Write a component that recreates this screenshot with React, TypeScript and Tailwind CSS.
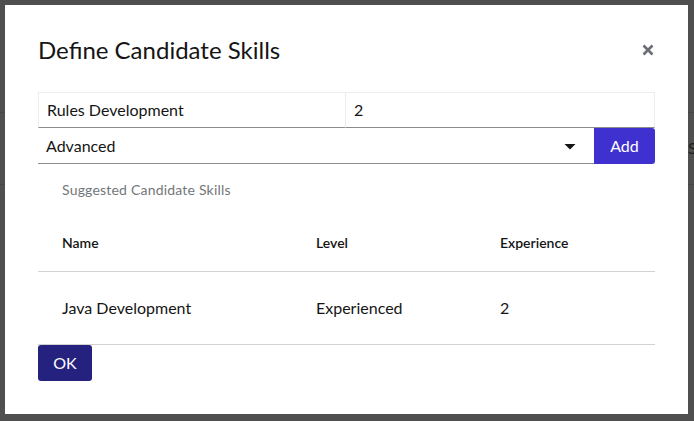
import React from "react";

const rows = [{ name: "Java Development", level: "Experienced", experience: "2" }];

const App = () => {
  return (
    <div
      className="relative h-[421px] w-[694px] overflow-hidden bg-[#4f4f4f]"
      style={{ fontFamily: "Lato, 'Noto Sans', sans-serif" }}
    >
      {/* page behind the backdrop */}
      <div className="pt-[112px]">
        <div className="h-[73px] border-t border-b border-[#464646]" />
        <div className="absolute left-[688px] top-[136px] text-[16px] text-[#1f1f1f]">S</div>
      </div>

      <div className="absolute left-[5px] top-[5px] flex h-[409px] w-[683px] flex-col bg-white px-[33px]">
        <div className="flex items-center justify-between pt-[29px]">
          <h1 className="text-[24px] leading-[32px] text-[#151515]">Define Candidate Skills</h1>
          <button className="mr-[1px] text-[#6a6e73]">
            <svg width="12" height="12" viewBox="0 0 12 12">
              <path d="M1.5 1.5 L10.5 10.5 M10.5 1.5 L1.5 10.5" stroke="currentColor" strokeWidth="2.6" strokeLinecap="butt" />
            </svg>
          </button>
        </div>

        <div className="mt-[26px] flex">
          <div className="flex h-[36px] w-[308px] items-center border border-b-[#8a8d90] border-[#ededed] px-[8px] text-[16px] text-[#151515]">
            Rules Development
          </div>
          <div className="flex h-[36px] flex-1 items-center border border-l-0 border-b-[#8a8d90] border-[#ededed] px-[8px] text-[16px] text-[#151515]">
            2
          </div>
        </div>
        <div className="flex h-[36px]">
          <div className="flex flex-1 items-center justify-between border-b border-[#8a8d90] px-[8px] text-[16px] text-[#151515]">
            <span>Advanced</span>
            <svg width="12" height="8" viewBox="0 0 12 8" className="mr-[10px] mt-[2px]">
              <path d="M0.5 1 L11.5 1 L6 6.5 Z" fill="#151515" />
            </svg>
          </div>
          <button className="w-[61px] rounded-r-[3px] bg-[#3e31cf] text-[16px] text-white">Add</button>
        </div>

        <div className="mt-[17px] pl-[24px] text-[14px] leading-[18px] tracking-[0.2px] text-[#737679]">
          Suggested Candidate Skills
        </div>

        <table className="mt-[16px] w-full border-collapse text-left">
          <thead>
            <tr className="border-b border-[#d2d2d2]">
              <th className="h-[56px] pl-[24px] align-middle text-[14px] font-semibold text-[#151515]">Name</th>
              <th className="align-middle text-[14px] font-semibold text-[#151515]">Level</th>
              <th className="align-middle text-[14px] font-semibold text-[#151515]">Experience</th>
            </tr>
          </thead>
          <tbody>
            {rows.map((r) => (
              <tr key={r.name} className="border-b border-[#d2d2d2] text-[16px] text-[#151515]">
                <td className="h-[73px] w-[278px] pl-[24px]">{r.name}</td>
                <td className="w-[184px]">{r.level}</td>
                <td>{r.experience}</td>
              </tr>
            ))}
          </tbody>
        </table>

        <div>
          <button className="h-[36px] w-[54px] rounded-[3px] bg-[#25217f] text-[16px] text-white">OK</button>
        </div>
      </div>
    </div>
  );
};

export default App;
